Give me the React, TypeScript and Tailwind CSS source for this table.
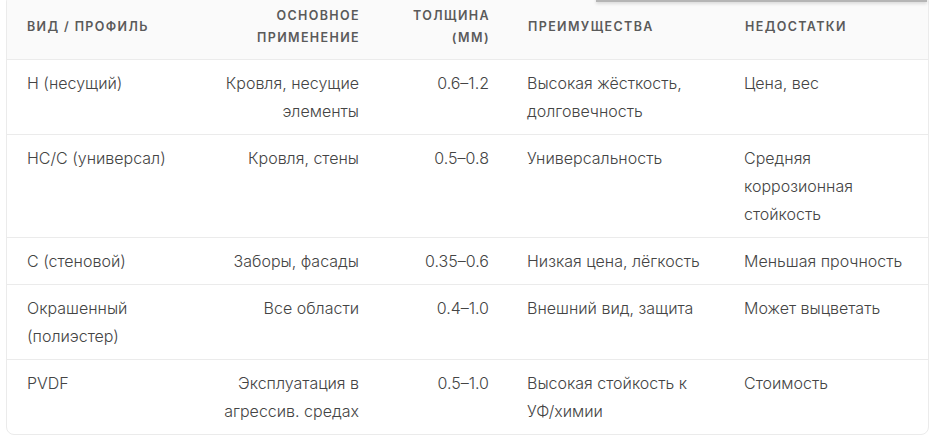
import React from "react";

const rows = [
  {
    type: "Н (несущий)",
    use: "Кровля, несущие элементы",
    thick: "0.6–1.2",
    pros: "Высокая жёсткость, долговечность",
    cons: "Цена, вес",
  },
  {
    type: "НС/С (универсал)",
    use: "Кровля, стены",
    thick: "0.5–0.8",
    pros: "Универсальность",
    cons: "Средняя коррозионная стойкость",
  },
  {
    type: "С (стеновой)",
    use: "Заборы, фасады",
    thick: "0.35–0.6",
    pros: "Низкая цена, лёгкость",
    cons: "Меньшая прочность",
  },
  {
    type: "Окрашенный (полиэстер)",
    use: "Все области",
    thick: "0.4–1.0",
    pros: "Внешний вид, защита",
    cons: "Может выцветать",
  },
  {
    type: "PVDF",
    use: "Эксплуатация в агрессив. средах",
    thick: "0.5–1.0",
    pros: "Высокая стойкость к УФ/химии",
    cons: "Стоимость",
  },
];

export default function App() {
  return (
    <div className="relative h-[440px] w-[939px] overflow-hidden bg-white pl-[6px] font-['Inter',sans-serif]">
      {/* edge of a popup sitting above the table */}
      <div className="absolute left-[596px] top-[-12px] z-10 h-[14px] w-[331px] border-b-2 border-[#b5b5b5] bg-white shadow-[0_2px_3px_rgba(0,0,0,0.12)]" />

      <div className="mt-[-6px] w-[923px] overflow-hidden rounded-[8px] border border-[#ebebeb]">
        <table className="w-full table-fixed border-collapse">
          <colgroup>
            <col className="w-[194px]" />
            <col className="w-[178px]" />
            <col className="w-[130px]" />
            <col className="w-[217px]" />
            <col />
          </colgroup>
          <thead>
            <tr className="border-b border-[#ebebeb] bg-[#fafafa] text-[12.5px] font-semibold uppercase leading-[22px] tracking-[0.11em] text-[#5a5a5a]">
              <th className="py-[10px] pl-5 pr-[18px] text-left align-middle font-semibold">Вид / Профиль</th>
              <th className="py-[10px] pl-5 pr-[19px] text-right align-middle font-semibold">Основное применение</th>
              <th className="py-[10px] pl-5 pr-[19px] text-right align-middle font-semibold">Толщина (мм)</th>
              <th className="py-[10px] pl-[19px] pr-5 text-left align-middle font-semibold">Преимущества</th>
              <th className="py-[10px] pl-[19px] pr-5 text-left align-middle font-semibold">Недостатки</th>
            </tr>
          </thead>
          <tbody className="text-[16px] font-light leading-[28px] text-[#444]">
            {rows.map((r, i) => (
              <tr key={r.type} className={i < rows.length - 1 ? "border-b border-[#ebebeb]" : ""}>
                <td className="py-[9px] pl-5 pr-4 align-top">{r.type}</td>
                <td className="py-[9px] pl-5 pr-5 text-right align-top">{r.use}</td>
                <td className="py-[9px] pl-5 pr-5 text-right align-top">{r.thick}</td>
                <td className="py-[9px] pl-[18px] pr-4 align-top">{r.pros}</td>
                <td className="py-[9px] pl-[18px] pr-4 align-top">{r.cons}</td>
              </tr>
            ))}
          </tbody>
        </table>
      </div>
    </div>
  );
}
